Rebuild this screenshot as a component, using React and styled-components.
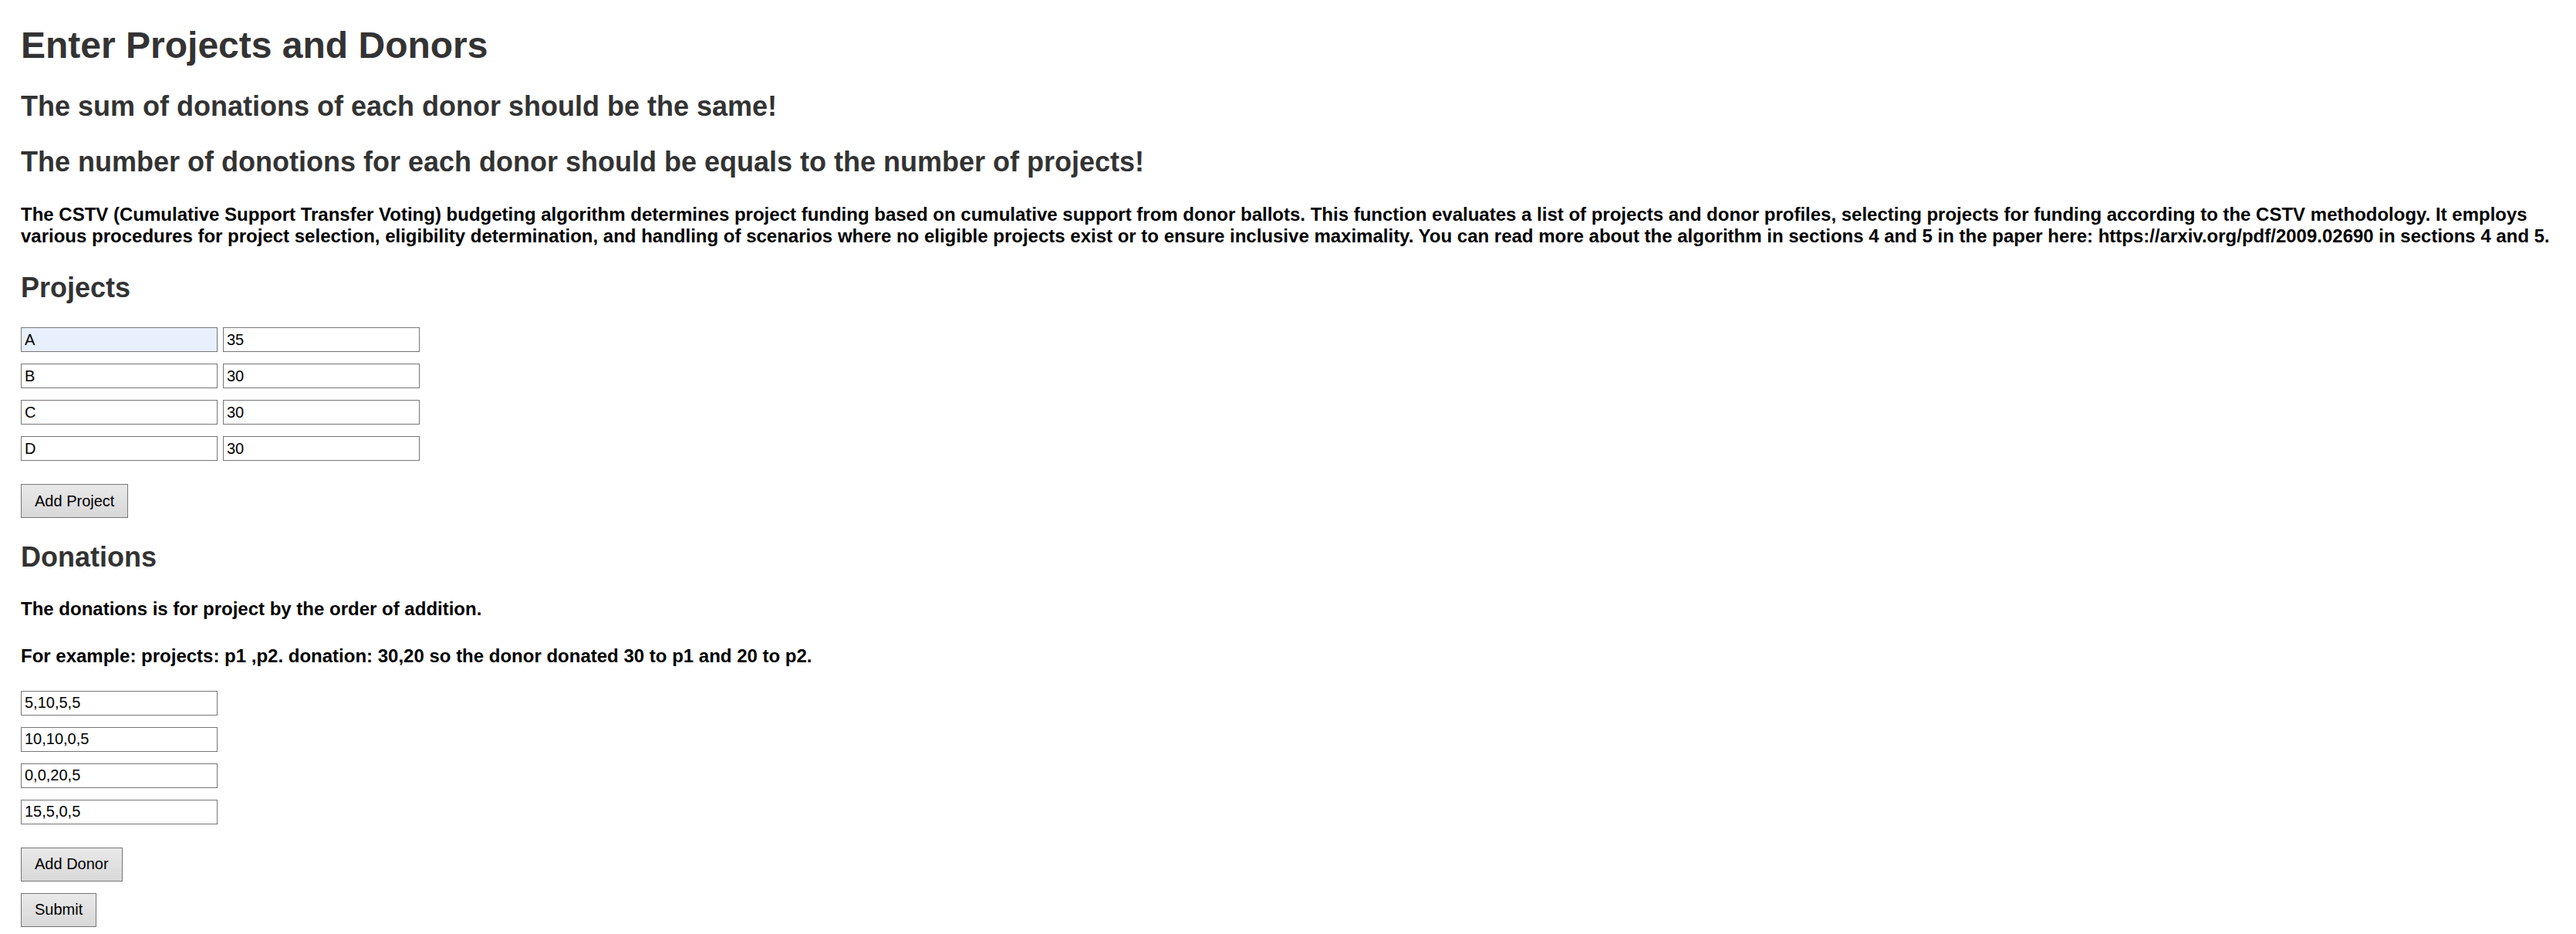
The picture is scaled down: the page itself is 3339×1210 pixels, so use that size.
import React, { useState } from 'react'
import styled, { createGlobalStyle } from 'styled-components'

const GlobalStyle = createGlobalStyle`
  html, body {
    margin: 0;
    padding: 0;
    background: #fff;
  }
  body {
    font-family: 'Liberation Sans', Arial, sans-serif;
  }
`

const Page = styled.div`
  padding: 31px 27px 0;
  font-family: 'Liberation Sans', Arial, sans-serif;
  line-height: 1.15;
  color: #000;
`

const Title = styled.h1`
  margin: 0;
  font-size: 48px;
  font-weight: bold;
  color: #333;
`

const Heading = styled.h2`
  margin: ${props => props.gap || '30.5px'} 0 0;
  font-size: 36px;
  font-weight: bold;
  color: #333;
`

const Note = styled.h4`
  margin: ${props => props.gap || '33px'} 0 0;
  font-size: 24px;
  font-weight: bold;
  color: #000;
`

const FieldList = styled.div`
  margin-top: ${props => props.gap || '30.5px'};
  display: flex;
  flex-direction: column;
  gap: 15px;
`

const FieldRow = styled.div`
  display: flex;
  gap: 7px;
`

const TextField = styled.input`
  box-sizing: border-box;
  width: 255px;
  height: 32px;
  margin: 0;
  padding: 1px 4px;
  border: 1px solid #767676;
  border-radius: 0;
  font-family: 'Liberation Sans', Arial, sans-serif;
  font-size: 20px;
  color: #000;
  background: ${props => (props.filled ? '#e8f0fe' : '#fff')};
  outline: none;
`

const Button = styled.button`
  display: block;
  box-sizing: border-box;
  height: 44px;
  margin: ${props => (props.close ? '15px' : '30px')} 0 0;
  padding: 0 17px;
  border: 1px solid #767676;
  border-radius: 0;
  background: linear-gradient(#e9e9e9, #d8d8d8);
  font-family: 'Liberation Sans', Arial, sans-serif;
  font-size: 20px;
  line-height: 1.15;
  color: #000;
  cursor: pointer;
`

const App = () => {
  const [projects, setProjects] = useState([
    { name: 'A', cost: '35' },
    { name: 'B', cost: '30' },
    { name: 'C', cost: '30' },
    { name: 'D', cost: '30' },
  ])
  const [donors, setDonors] = useState(['5,10,5,5', '10,10,0,5', '0,0,20,5', '15,5,0,5'])

  const updateProject = (i, key, value) =>
    setProjects(projects.map((p, j) => (j === i ? { ...p, [key]: value } : p)))

  return (
    <Page>
      <GlobalStyle />
      <Title>Enter Projects and Donors</Title>
      <Heading>The sum of donations of each donor should be the same!</Heading>
      <Heading>The number of donotions for each donor should be equals to the number of projects!</Heading>
      <Note gap="34.5px">
        The CSTV (Cumulative Support Transfer Voting) budgeting algorithm determines project funding based on
        cumulative support from donor ballots. This function evaluates a list of projects and donor profiles,
        selecting projects for funding according to the CSTV methodology. It employs various procedures for project
        selection, eligibility determination, and handling of scenarios where no eligible projects exist or to ensure
        inclusive maximality. You can read more about the algorithm in sections 4 and 5 in the paper here:
        https://arxiv.org/pdf/2009.02690 in sections 4 and 5.
      </Note>

      <Heading gap="32.5px">Projects</Heading>
      <FieldList>
        {projects.map((p, i) => (
          <FieldRow key={i}>
            <TextField
              filled={i === 0}
              value={p.name}
              onChange={e => updateProject(i, 'name', e.target.value)}
            />
            <TextField value={p.cost} onChange={e => updateProject(i, 'cost', e.target.value)} />
          </FieldRow>
        ))}
      </FieldList>
      <Button onClick={() => setProjects([...projects, { name: '', cost: '' }])}>Add Project</Button>

      <Heading gap="29.5px">Donations</Heading>
      <Note gap="33px">The donations is for project by the order of addition.</Note>
      <Note gap="33px">For example: projects: p1 ,p2. donation: 30,20 so the donor donated 30 to p1 and 20 to p2.</Note>
      <FieldList gap="31.5px">
        {donors.map((d, i) => (
          <FieldRow key={i}>
            <TextField
              value={d}
              onChange={e => setDonors(donors.map((x, j) => (j === i ? e.target.value : x)))}
            />
          </FieldRow>
        ))}
      </FieldList>
      <Button onClick={() => setDonors([...donors, ''])}>Add Donor</Button>
      <Button close>Submit</Button>
    </Page>
  )
}

export default App
